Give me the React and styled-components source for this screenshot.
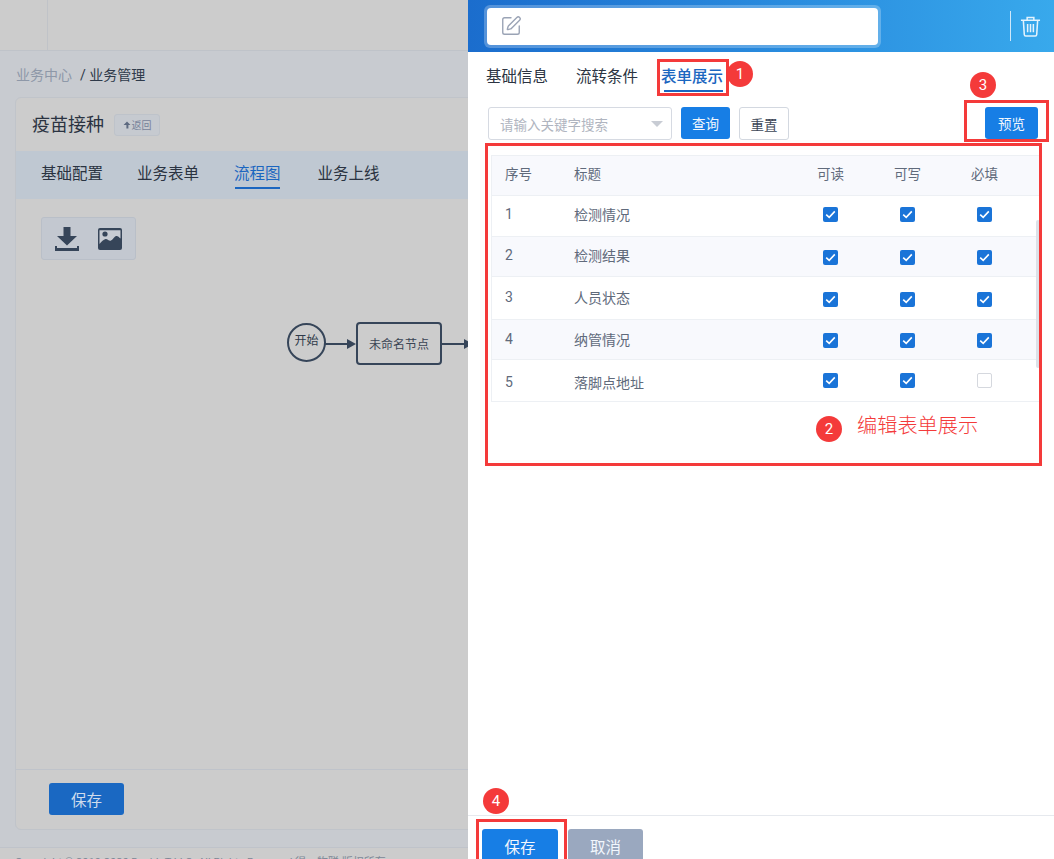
import React from 'react';
import styled, { createGlobalStyle } from 'styled-components';
import { SquarePen } from 'lucide-react';

const Global = createGlobalStyle`
  html, body { margin: 0; padding: 0; background: #ccc; }
  body { font-family: Roboto, "Noto Sans CJK SC", sans-serif; }
  * { box-sizing: border-box; }
`;
const Page = styled.div`display: flex; width: 1054px; height: 859px; overflow: hidden;`;

/* dimmed background page */
const Back = styled.div`width: 468px; flex: none; display: flex; flex-direction: column; background: #c8cbd0; overflow: hidden;`;
const TopBar = styled.div`height: 51px; flex: none; background: #cccccc; border-bottom: 1px solid #bfc3c9; display: flex;`;
const TopCell = styled.div`width: 48px; border-right: 1px solid #c0c3c8;`;
const Crumbs = styled.div`height: 46px; flex: none; padding: 14px 0 0 16px; font-size: 14px; line-height: 20px; color: #2f3a4a; white-space: nowrap;`;
const CrumbLink = styled.span`color: #8e98a8; margin-right: 8px;`;
const Card = styled.div`width: 480px; height: 733px; flex: none; margin-left: 15px; background: #cccccc; border: 1px solid #c0c4ca; border-radius: 6px; display: flex; flex-direction: column; overflow: hidden;`;
const CardHead = styled.div`height: 53px; flex: none; display: flex; align-items: center; padding: 0 0 0 16px; gap: 10px;`;
const CardTitle = styled.div`font-size: 18px; color: #2a3341; font-weight: 400; line-height: 24px;`;
const BackBtn = styled.div`width: 46px; height: 22px; display: flex; align-items: center; justify-content: center; gap: 1px; background: #c6cad0; border: 1px solid #bec3ca; border-radius: 3px; font-size: 10px; color: #77829a;`;
const CardTabs = styled.div`height: 48px; flex: none; background: #bfc8d2; display: flex; gap: 34px; padding-left: 25px;`;
const CardTab = styled.div`
  font-size: 15.5px; height: 36px; line-height: 47px; position: relative;
  margin-right: ${p => p.$mr || 0}px; margin-left: ${p => p.$ml || 0}px;
  color: ${p => p.$on ? '#1b66c0' : '#2a3341'};
  ${p => p.$on ? `&::after { content: ''; position: absolute; left: 1px; right: 1px; bottom: -2px; height: 2px; background: #1b66c0; }` : ''}
`;
const Canvas = styled.div`flex: 1; position: relative;`;
const IconBox = styled.div`position: absolute; left: 25px; top: 18px; width: 95px; height: 43px; background: #c3c8d0; border: 1px solid #b9bfc8; border-radius: 3px; display: flex; align-items: center; gap: 19px; padding-left: 13px;`;
const StartNode = styled.div`position: absolute; left: 271px; top: 124px; width: 39px; height: 39px; border-radius: 50%; border: 2px solid #364559; font-size: 12px; color: #2f3a4a; display: flex; align-items: center; justify-content: center; padding-bottom: 6px;`;
const TaskNode = styled.div`position: absolute; left: 340px; top: 123px; width: 86px; height: 43px; border-radius: 4px; border: 2px solid #364559; font-size: 12px; color: #3a4454; display: flex; align-items: center; justify-content: center;`;
const Arrow = styled.svg`position: absolute; left: ${p => p.$x}px; top: 139px;`;
const CardFoot = styled.div`height: 60px; flex: none; border-top: 1px solid #bfc3ca; padding: 13px 0 0 33px;`;
const SaveDim = styled.div`width: 75px; height: 32px; background: #1a68c2; border-radius: 3px; color: #cfdcec; font-size: 15.5px; display: flex; align-items: center; justify-content: center;`;
const Copy = styled.div`margin-top: 17px; border-top: 1px solid #bfc3ca; padding: 8px 0 0 15px; font-size: 11px; line-height: 14px; color: #7d8796; white-space: nowrap; flex: none; background: #cccccc;`;

/* drawer */
const Drawer = styled.div`width: 586px; flex: none; height: 859px; position: relative; background: #fff; display: flex; flex-direction: column; overflow: hidden;`;
const Header = styled.div`height: 52px; flex: none; background: linear-gradient(90deg, #1b6dcd 0%, #2b8fe0 60%, #38a9ec 100%); display: flex; align-items: center; padding: 0 13px 0 16px;`;
const TitleHalo = styled.div`width: 397px; height: 43px; background: rgba(255,255,255,.25); border-radius: 6px; padding: 3px; margin-top: 0;`;
const TitleInput = styled.div`height: 100%; background: #fff; border-radius: 4px; display: flex; align-items: center; padding-left: 13px; color: #9aa3b5;`;
const HeadRight = styled.div`margin-left: auto; display: flex; align-items: center; gap: 9px;`;
const VLine = styled.div`width: 1px; height: 30px; background: #cfe8fa;`;
const Tabs = styled.div`height: 44px; flex: none; padding: 14px 0 0 18px; display: flex; gap: 28px;`;
const Tab = styled.div`
  height: 26px; font-size: 15.5px; line-height: 22px; position: relative; font-weight: ${p => p.$on ? 500 : 400};
  color: ${p => p.$on ? '#1b66c0' : '#2c3442'}; margin-left: ${p => p.$on ? -5 : 0}px;
  ${p => p.$on ? `&::after { content: ''; position: absolute; left: 3px; right: 0; bottom: 0; height: 2px; background: #1b66c0; }` : ''}
`;
const Bar = styled.div`height: 33px; margin-top: 11px; flex: none; padding: 0 16px 0 20px; display: flex; align-items: flex-start;`;
const Select = styled.div`width: 184px; height: 33px; border: 1px solid #d6dae2; border-radius: 3px; display: flex; align-items: center; justify-content: space-between; padding: 0 8px 0 11px; font-size: 13.5px; color: #b0b5c0;`;
const Caret = styled.span`width: 0; height: 0; border-left: 6.5px solid transparent; border-right: 6.5px solid transparent; border-top: 6px solid #c8ccd4;`;
const Btn = styled.div`
  width: ${p => p.$w || 50}px; height: ${p => p.$plain ? 33 : 32}px; border-radius: 3px; display: flex; align-items: center; justify-content: center; font-size: 13.5px;
  margin-left: ${p => p.$ml || 0}px;
  background: ${p => p.$plain ? '#fff' : '#177ee5'}; color: ${p => p.$plain ? '#3c4656' : '#f2f7fd'};
  border: ${p => p.$plain ? '1px solid #d3d8e0' : 'none'};
`;
const Table = styled.div`margin: 15px 14px 0 23px; width: 549px; height: 247px; flex: none; border: 1px solid #edf0f4; border-right: none; position: relative;`;
const Row = styled.div`
  display: grid; grid-template-columns: 82px 218px 77px 77px 77px; align-items: center;
  height: ${p => p.$h}px; background: ${p => p.$alt ? '#f8f9fd' : '#fff'}; border-bottom: ${p => p.$last ? 'none' : '1px solid #edf0f4'};
  font-size: ${p => p.$head ? 13.5 : 14}px; color: #606a7b;
`;
const NumCell = styled.div`padding-left: 13px; margin-top: ${p => p.$dy || 0}px;`;
const TitleCell = styled.div`margin-top: ${p => p.$dy || 0}px;`;
const CheckCell = styled.div`text-align: center; display: flex; justify-content: center; margin-top: ${p => p.$dy || 0}px;`;
const Check = styled.div`width: 15px; height: 15px; border-radius: 2px; background: ${p => p.$on ? '#1a74d8' : '#fff'}; border: ${p => p.$on ? 'none' : '1px solid #d5d8de'}; display: flex; align-items: center; justify-content: center;`;
const Scroll = styled.div`position: absolute; right: 0; top: 64px; width: 4px; height: 148px; background: #dde1e8; border-radius: 2px;`;
const Spacer = styled.div`flex: 1;`;
const Foot = styled.div`height: 44px; flex: none; border-top: 1px solid #e6e9ee; padding: 13px 0 0 14px; display: flex; gap: 10px;`;
const FootBtn = styled.div`width: ${p => p.$grey ? 75 : 76}px; height: 33px; border-radius: 3px 3px 0 0; background: ${p => p.$grey ? '#9aa8bf' : '#177ee5'}; color: #f2f7fd; font-size: 15.5px; display: flex; align-items: center; justify-content: center;`;

/* annotations laid over the drawer */
const RedBox = styled.div`position: absolute; left: ${p => p.$x}px; top: ${p => p.$y}px; width: ${p => p.$w}px; height: ${p => p.$h}px; border: 3px solid #f43a3a; pointer-events: none;`;
const Bubble = styled.div`position: absolute; left: ${p => p.$x - 13}px; top: ${p => p.$y - 13}px; width: 26px; height: 26px; border-radius: 50%; background: #f43a3a; color: #fff; font-size: 15px; display: flex; align-items: center; justify-content: center;`;
const Note = styled.div`position: absolute; left: 389px; top: 412px; font-size: 20.2px; line-height: 28px; font-weight: 300; color: #f43a3a; white-space: nowrap;`;

const Tick = () => (
  <svg width="11" height="9" viewBox="0 0 11 9" fill="none"><path d="M1.2 4.6 4.2 7.4 9.8 1.4" stroke="#fff" strokeWidth="1.6" /></svg>
);
const rows = [
  { n: 1, t: '检测情况', h: 41, c: [1, 1, 1], dt: -5, dc: -4 },
  { n: 2, t: '检测结果', h: 40, c: [1, 1, 1], alt: 1, dt: -3, dc: 1 },
  { n: 3, t: '人员状态', h: 43, c: [1, 1, 1], dt: -3, dc: 3 },
  { n: 4, t: '纳管情况', h: 40, c: [1, 1, 1], alt: 1, dt: -2, dc: 2 },
  { n: 5, t: '落脚点地址', h: 41, c: [1, 1, 0], last: 1, dt: 2, dc: 0 },
];

export default function App() {
  return (
    <Page>
      <Global />
      <Back>
        <TopBar><TopCell /></TopBar>
        <Crumbs><CrumbLink>业务中心</CrumbLink>/ 业务管理</Crumbs>
        <Card>
          <CardHead>
            <CardTitle>疫苗接种</CardTitle>
            <BackBtn>
              <svg width="8" height="8" viewBox="0 0 8 8"><path d="M4 .5 7.500 4H5.400v3.500H3.400V4H.5z" fill="#5e6a80" /></svg>
              返回
            </BackBtn>
          </CardHead>
          <CardTabs>
            <CardTab>基础配置</CardTab>
            <CardTab>业务表单</CardTab>
            <CardTab $on $ml={1} $mr={3}>流程图</CardTab>
            <CardTab>业务上线</CardTab>
          </CardTabs>
          <Canvas>
            <IconBox>
              <svg width="24" height="24" viewBox="0 0 24 24" fill="#364559"><path d="M8.500 0h7v9H22L12 18.500 2 9h6.500z" /><path d="M0 19h2v2h20v-2h2v5H0z" /></svg>
              <svg width="24" height="22" viewBox="0 0 24 22"><rect width="24" height="22" rx="2" fill="#364559" /><path d="M1.500 2.200h21v8.300c-1.500-1.500-3-3-4.500-2.500s-3 3.500-5 4.500-3.500-2-5.500-1.500-4 2.500-6 5z" fill="#c8ccd3" /><circle cx="7" cy="6" r="2.600" fill="#364559" /></svg>
            </IconBox>
            <StartNode>开始</StartNode>
            <Arrow $x={309} width="32" height="12" viewBox="0 0 32 12"><path d="M0 6h23" stroke="#364559" strokeWidth="2" /><path d="M22 1l9 5-9 5z" fill="#364559" /></Arrow>
            <TaskNode>未命名节点</TaskNode>
            <Arrow $x={426} width="32" height="12" viewBox="0 0 32 12"><path d="M0 6h23" stroke="#364559" strokeWidth="2" /><path d="M22 1l9 5-9 5z" fill="#364559" /></Arrow>
          </Canvas>
          <CardFoot><SaveDim>保存</SaveDim></CardFoot>
        </Card>
        <Copy>Copyright © 2019-2020 DaviJoT LLC. All Rights Reserved 得一物联 版权所有</Copy>
      </Back>

      <Drawer>
        <Header>
          <TitleHalo>
            <TitleInput><SquarePen size={22} strokeWidth={1.5} /></TitleInput>
          </TitleHalo>
          <HeadRight>
            <VLine />
            <svg width="21" height="21" viewBox="0 0 22 22" fill="none" stroke="#e4f3fd" strokeWidth="1.6"><path d="M1 4.500h20M7.500 4.500V1.500h7v3M3.500 4.500l1 15a1.500 1.500 0 0 0 1.500 1.500h10a1.500 1.500 0 0 0 1.500-1.500l1-15M8 8.500v8.500M11 8.500v8.500M14 8.500v8.500" /></svg>
          </HeadRight>
        </Header>
        <Tabs>
          <Tab>基础信息</Tab>
          <Tab>流转条件</Tab>
          <Tab $on>表单展示</Tab>
        </Tabs>
        <Bar>
          <Select>请输入关键字搜索<Caret /></Select>
          <Btn $ml={9} $w={49}>查询</Btn>
          <Btn $plain $ml={9}>重置</Btn>
          <Spacer />
          <Btn $w={53}>预览</Btn>
        </Bar>
        <Table>
          <Row $h={40} $alt $head>
            <NumCell $dy={-5}>序号</NumCell>
            <TitleCell $dy={-5}>标题</TitleCell>
            <CheckCell $dy={-5}>可读</CheckCell>
            <CheckCell $dy={-5}>可写</CheckCell>
            <CheckCell $dy={-5}>必填</CheckCell>
          </Row>
          {rows.map(r => (
            <Row key={r.n} $h={r.h} $alt={r.alt} $last={r.last}>
              <NumCell $dy={r.dt}>{r.n}</NumCell>
              <TitleCell $dy={r.dt}>{r.t}</TitleCell>
              {r.c.map((on, i) => (
                <CheckCell key={i} $dy={r.dc}>
                  <Check $on={on}>{on ? <Tick /> : null}</Check>
                </CheckCell>
              ))}
            </Row>
          ))}
          <Scroll />
        </Table>
        <Spacer />
        <Foot>
          <FootBtn>保存</FootBtn>
          <FootBtn $grey>取消</FootBtn>
        </Foot>

        <RedBox $x={189} $y={59} $w={72} $h={37} />
        <Bubble $x={272} $y={74}>1</Bubble>
        <RedBox $x={496} $y={100} $w={85} $h={42} />
        <Bubble $x={515} $y={85}>3</Bubble>
        <RedBox $x={17} $y={143} $w={557} $h={323} />
        <Bubble $x={361} $y={429}>2</Bubble>
        <Note>编辑表单展示</Note>
        <Bubble $x={28} $y={801}>4</Bubble>
        <RedBox $x={8} $y={819} $w={91} $h={44} />
      </Drawer>
    </Page>
  );
}
